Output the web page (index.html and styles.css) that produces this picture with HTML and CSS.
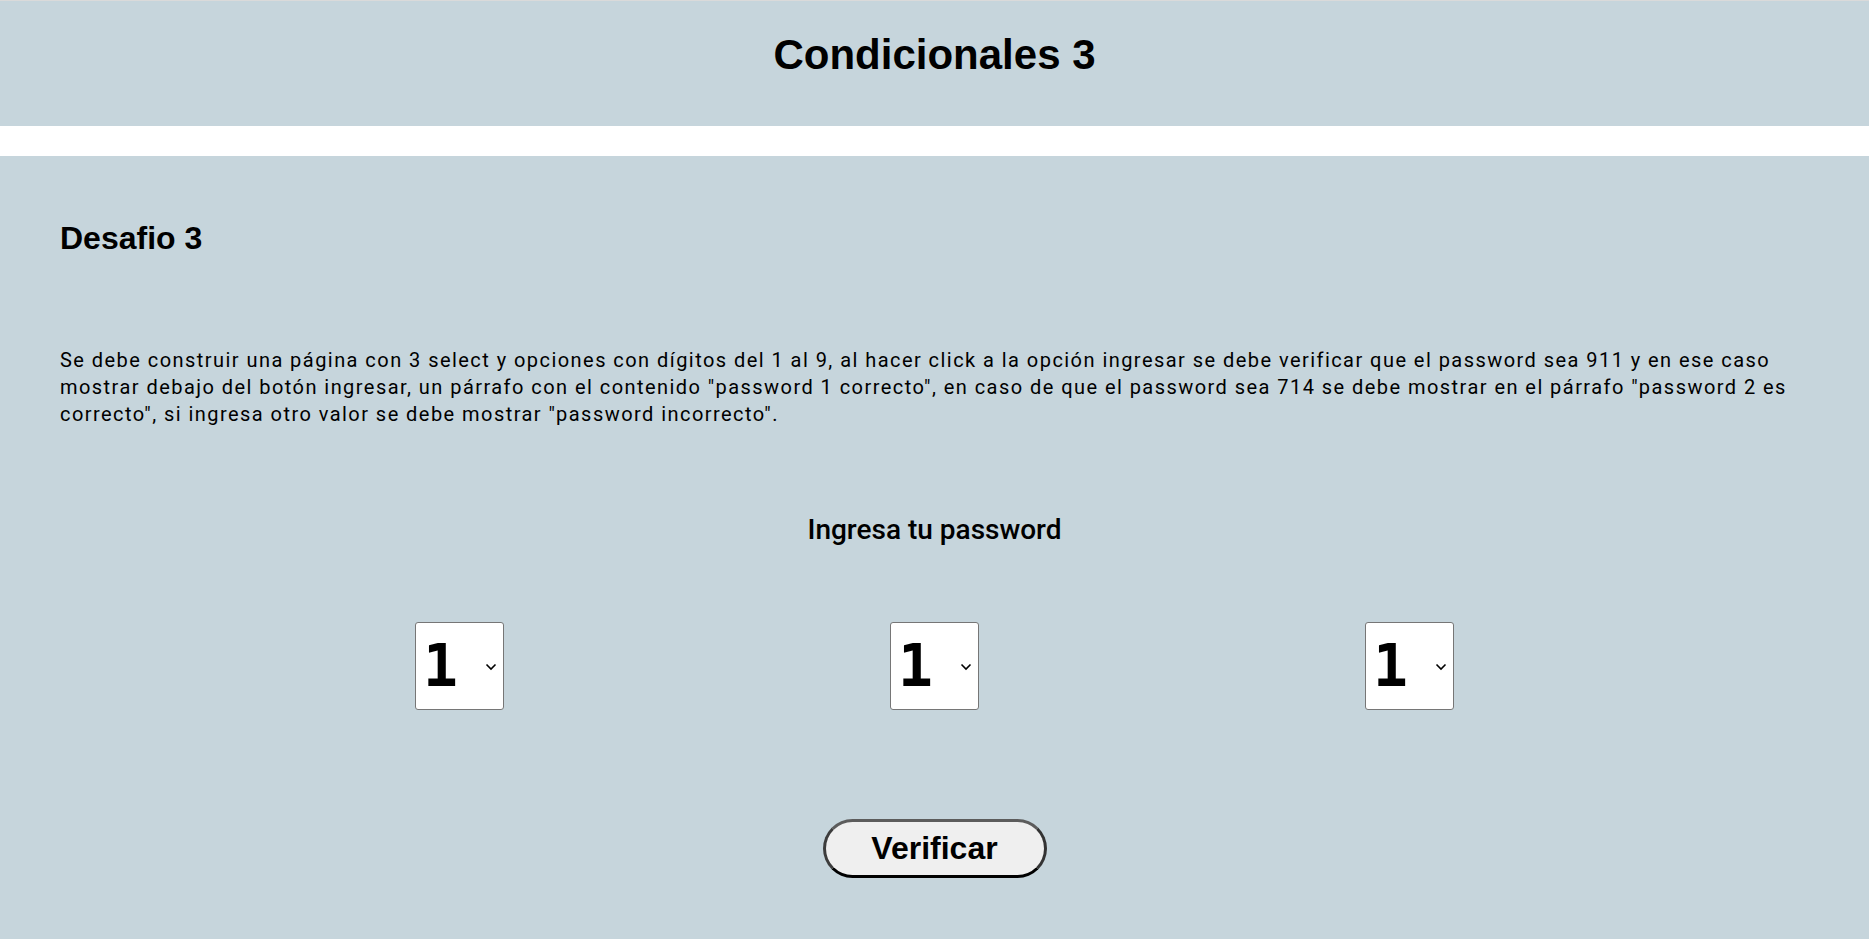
FILE: index.html
```html
<!DOCTYPE html>
<html lang="es">
<head>
<meta charset="utf-8">
<title>Condicionales 3</title>
<link rel="stylesheet" href="styles.css">
</head>
<body>
<header class="top">
  <h1 class="top-title">Condicionales 3</h1>
</header>
<main class="challenge">
  <h2 class="challenge-title">Desafio 3</h2>
  <p class="challenge-desc">Se debe construir una página con 3 select y opciones con dígitos del 1 al 9, al hacer click a la opción ingresar se debe verificar que el password sea 911 y en ese caso mostrar debajo del botón ingresar, un párrafo con el contenido "password 1 correcto", en caso de que el password sea 714 se debe mostrar en el párrafo "password 2 es correcto", si ingresa otro valor se debe mostrar "password incorrecto".</p>
  <h3 class="prompt">Ingresa tu password</h3>
  <div class="digits">
    <div class="digit-wrap">
      <select class="digit" aria-label="Dígito 1">
        <option>1</option><option>2</option><option>3</option><option>4</option><option>5</option><option>6</option><option>7</option><option>8</option><option>9</option>
      </select>
      <svg class="chevron" width="12" height="8" viewBox="0 0 12 8" aria-hidden="true"><path d="M1.5 1.5 L6 6 L10.5 1.5" fill="none" stroke="#000" stroke-width="1.6"/></svg>
    </div>
    <div class="digit-wrap">
      <select class="digit" aria-label="Dígito 2">
        <option>1</option><option>2</option><option>3</option><option>4</option><option>5</option><option>6</option><option>7</option><option>8</option><option>9</option>
      </select>
      <svg class="chevron" width="12" height="8" viewBox="0 0 12 8" aria-hidden="true"><path d="M1.5 1.5 L6 6 L10.5 1.5" fill="none" stroke="#000" stroke-width="1.6"/></svg>
    </div>
    <div class="digit-wrap">
      <select class="digit" aria-label="Dígito 3">
        <option>1</option><option>2</option><option>3</option><option>4</option><option>5</option><option>6</option><option>7</option><option>8</option><option>9</option>
      </select>
      <svg class="chevron" width="12" height="8" viewBox="0 0 12 8" aria-hidden="true"><path d="M1.5 1.5 L6 6 L10.5 1.5" fill="none" stroke="#000" stroke-width="1.6"/></svg>
    </div>
  </div>
  <div class="actions">
    <button class="verify" type="button">Verificar</button>
  </div>
</main>
</body>
</html>
```
FILE: styles.css
```css
html, body {
  margin: 0;
  padding: 0;
}
body {
  background: #ffffff;
  border-top: 1px solid #dadada;
  font-family: "Liberation Sans", Arial, sans-serif;
  color: #000;
}
.top {
  background: #c6d5dc;
  height: 125px;
  margin-bottom: 30px;
  display: flex;
  justify-content: center;
}
.top-title {
  margin: 30px 0 0;
  font-size: 42px;
  font-weight: 700;
  line-height: normal;
}
.challenge {
  background: #c6d5dc;
  min-height: calc(100vh - 156px);
  box-sizing: border-box;
  padding: 64px 60px 40px;
  display: flex;
  flex-direction: column;
}
.challenge-title {
  margin: 0;
  font-size: 32px;
  font-weight: 700;
  line-height: normal;
}
.challenge-desc {
  margin: 90px 0 0;
  font-family: Roboto, "Liberation Sans", sans-serif;
  font-weight: 400;
  font-size: 20px;
  letter-spacing: 1.45px;
  line-height: 27px;
}
.prompt {
  margin: 85px 0 0;
  text-align: center;
  font-family: Roboto, "Liberation Sans", sans-serif;
  font-size: 28px;
  font-weight: 500;
  line-height: normal;
}
.digits {
  margin-top: 76px;
  display: grid;
  grid-template-columns: repeat(3, 475px);
  justify-content: center;
  justify-items: center;
}
.digit-wrap {
  position: relative;
  width: 89px;
  height: 88px;
}
.digit {
  appearance: none;
  -webkit-appearance: none;
  width: 89px;
  height: 88px;
  margin: 0;
  box-sizing: border-box;
  font-family: "DejaVu Sans Mono", "Liberation Mono", monospace;
  font-weight: 700;
  font-size: 58px;
  padding: 0 0 0 7px;
  background: #fff;
  color: #000;
  border: 1px solid #767676;
  border-radius: 3px;
}
.chevron {
  position: absolute;
  right: 7px;
  top: 41px;
  pointer-events: none;
}
.actions {
  margin-top: 109px;
  display: flex;
  justify-content: center;
}
.verify {
  width: 224px;
  height: 59px;
  border-radius: 30px;
  border: 3px solid;
  border-color: #5c5c5c #333 #000 #3c3c3c;
  background: #efefef;
  font-family: "Liberation Sans", Arial, sans-serif;
  font-weight: 700;
  font-size: 32px;
  color: #000;
  padding: 0;
}
```
